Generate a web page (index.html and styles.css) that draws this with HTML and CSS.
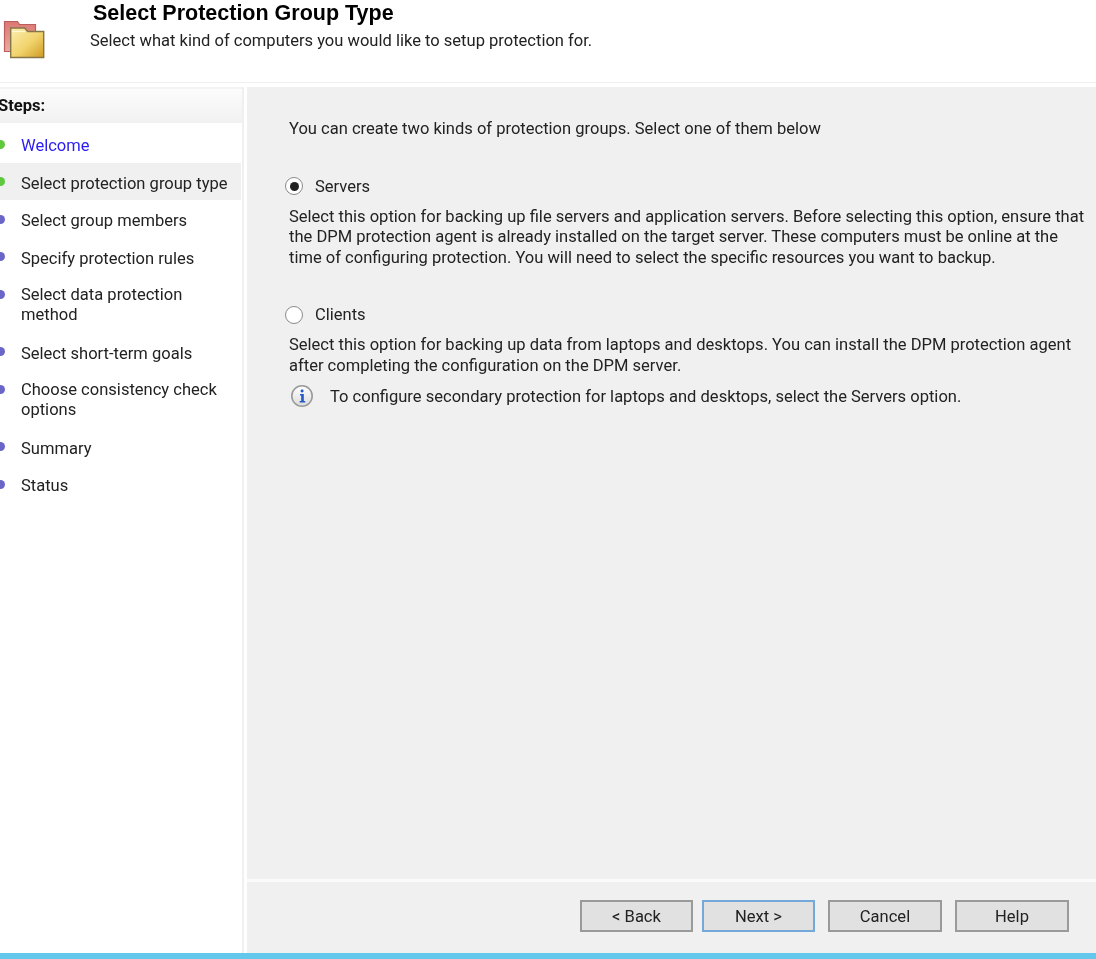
FILE: index.html
```html
<!DOCTYPE html>
<html lang="en">
<head>
<meta charset="utf-8">
<title>Select Protection Group Type</title>
<link rel="stylesheet" href="styles.css">
</head>
<body>
<div class="wizard">
  <header class="head">
    <svg class="head-icon" width="46" height="62" viewBox="0 0 46 62">
      <defs>
        <linearGradient id="fy" x1="0" y1="0" x2="1" y2="1"><stop offset="0" stop-color="#fbeeb0"/><stop offset=".55" stop-color="#f1d36c"/><stop offset="1" stop-color="#cf9a22"/></linearGradient>
        <linearGradient id="fr" x1="0" y1="0" x2="0" y2="1"><stop offset="0" stop-color="#dc7773"/><stop offset="1" stop-color="#eaaaa4"/></linearGradient>
      </defs>
      <path d="M4.5 21.5h13l2 3h16v27h-31z" fill="url(#fr)" stroke="#b9605c" stroke-width="1.2"/>
      <path d="M10.7 28h14l3 3.5h16v26h-33z" fill="url(#fy)" stroke="#867545" stroke-width="1.4"/>
      <path d="M12 31.5h13" stroke="#fff8d8" stroke-width="1.2"/>
    </svg>
    <div class="head-text">
      <h1 class="title">Select Protection Group Type</h1>
      <p class="subtitle">Select what kind of computers you would like to setup protection for.</p>
    </div>
  </header>
  <div class="body">
    <nav class="steps">
      <div class="steps-title">Steps:</div>
      <ul class="step-list">
        <li class="step done link">Welcome</li>
        <li class="step done current">Select protection group type</li>
        <li class="step">Select group members</li>
        <li class="step">Specify protection rules</li>
        <li class="step multi">Select data protection method</li>
        <li class="step">Select short-term goals</li>
        <li class="step multi">Choose consistency check options</li>
        <li class="step">Summary</li>
        <li class="step">Status</li>
      </ul>
    </nav>
    <main class="main">
      <section class="content">
        <p class="intro">You can create two kinds of protection groups. Select one of them below</p>
        <div class="option">
          <span class="radio checked"></span><span class="option-label">Servers</span>
        </div>
        <p class="desc">Select this option for backing up file servers and application servers. Before selecting this option, ensure that the DPM protection agent is already installed on the target server. These computers must be online at the time of configuring protection. You will need to select the specific resources you want to backup.</p>
        <div class="option second">
          <span class="radio"></span><span class="option-label">Clients</span>
        </div>
        <p class="desc">Select this option for backing up data from laptops and desktops. You can install the DPM protection agent after completing the configuration on the DPM server.</p>
        <div class="note">
          <svg class="info" width="24" height="24" viewBox="0 0 24 24">
            <defs><linearGradient id="ig" x1="0" y1="0" x2="0" y2="1"><stop offset="0" stop-color="#fff"/><stop offset="1" stop-color="#dcdcdc"/></linearGradient></defs>
            <circle cx="12" cy="12" r="10.2" fill="url(#ig)" stroke="#9a9a9a" stroke-width="1.6"/>
            <rect x="10.6" y="5.4" width="3" height="3" rx="1.4" fill="#2458c8"/>
            <path d="M10 10h3.8v7H15.2v1.4H9.6V17h1.6v-5.6H10z" fill="#2458c8"/>
          </svg>
          <span>To configure secondary protection for laptops and desktops, select the Servers option.</span>
        </div>
      </section>
      <footer class="foot">
        <button class="btn" type="button">&lt; Back</button>
        <button class="btn primary" type="button">Next &gt;</button>
        <button class="btn wide" type="button">Cancel</button>
        <button class="btn wide" type="button">Help</button>
      </footer>
    </main>
  </div>
  <div class="strip"></div>
</div>
</body>
</html>
```
FILE: styles.css
```css
* { box-sizing: border-box; }
html, body { margin: 0; height: 100%; }
body {
  background: #fff;
  color: #222;
  font-family: "Roboto", "Liberation Sans", sans-serif;
  font-size: 16.55px;
  overflow: hidden;
}
.wizard { height: 959px; display: flex; flex-direction: column; filter: blur(0.35px); }
.head {
  height: 83px;
  flex: none;
  display: flex;
  border-bottom: 1px solid #f0f0f0;
}
.head-icon { flex: none; }
.head-text { margin-left: 44px; }
.title {
  margin: 1px 0 0 3px;
  font-family: "Liberation Sans", sans-serif;
  font-size: 21.5px;
  line-height: 24px;
  font-weight: 700;
  color: #000;
}
.subtitle { margin: 4px 0 0; line-height: 24px; color: #222; }
.body { flex: 1; display: flex; padding-top: 4px; min-height: 0; }
.steps {
  width: 244px;
  flex: none;
  border-right: 2px solid #f0f0f0;
  border-top: 2px solid #f3f3f3;
}
.steps-title {
  height: 34px;
  margin-left: -2px;
  line-height: 34px;
  font-weight: 700;
  color: #111;
  background: linear-gradient(#fcfcfc, #f1f1f1);
}
.step-list { list-style: none; margin: 2px 0 0; padding: 0; }
.step {
  position: relative;
  padding: 11.25px 12px 6.25px 21px;
  line-height: 20px;
  margin-right: 1px;
}
.step::before {
  content: "";
  position: absolute;
  left: -4px;
  top: 14.5px;
  width: 9px;
  height: 9px;
  border-radius: 50%;
  background: #6a66c8;
}
.step.done::before { background: #5fc83c; }
.step.multi { padding-top: 9.75px; padding-bottom: 6.75px; line-height: 20.5px; }
.link { color: #2a1cf0; }
.current { background: #f0f0f0; }
.main {
  flex: 1;
  display: flex;
  flex-direction: column;
  margin-left: 3px;
  min-width: 0;
}
.content { flex: 1; background: #f0f0f0; padding: 30px 8px 0 42px; border-bottom: 3px solid #fafafa; }
.intro { margin: 0; line-height: 24px; }
.option { display: flex; align-items: center; height: 24px; margin: 33px 0 0 -4px; }
.option.second { margin-top: 34.5px; }
.radio {
  width: 18px;
  height: 18px;
  border-radius: 50%;
  border: 1.5px solid #8a8a8a;
  background: #fff;
  flex: none;
  display: flex;
  align-items: center;
  justify-content: center;
}
.radio.checked::after { content: ""; width: 9px; height: 9px; border-radius: 50%; background: #222; }
.option-label { margin-left: 12px; }
.desc { margin: 8.5px 0 0; line-height: 20.5px; }
.note { display: flex; align-items: center; height: 24px; margin-top: 8px; }
.note span { margin-left: 16px; }
.info { margin-left: 1px; flex: none; }
.foot {
  flex: none;
  height: 71px;
  background: #f0f0f0;
  display: flex;
  align-items: flex-start;
  justify-content: flex-end;
  padding: 18px 27px 0 0;
  gap: 9px;
}
.btn {
  width: 113px;
  height: 32px;
  border: 2px solid #9a9a9a;
  background: #e1e1e1;
  font: inherit;
  color: #222;
  padding: 0;
}
.btn.primary { border-color: #74a8d8; }
.btn.wide { width: 114px; margin-left: 4px; }
.strip { height: 6px; flex: none; background: #63c8ec; }
```
